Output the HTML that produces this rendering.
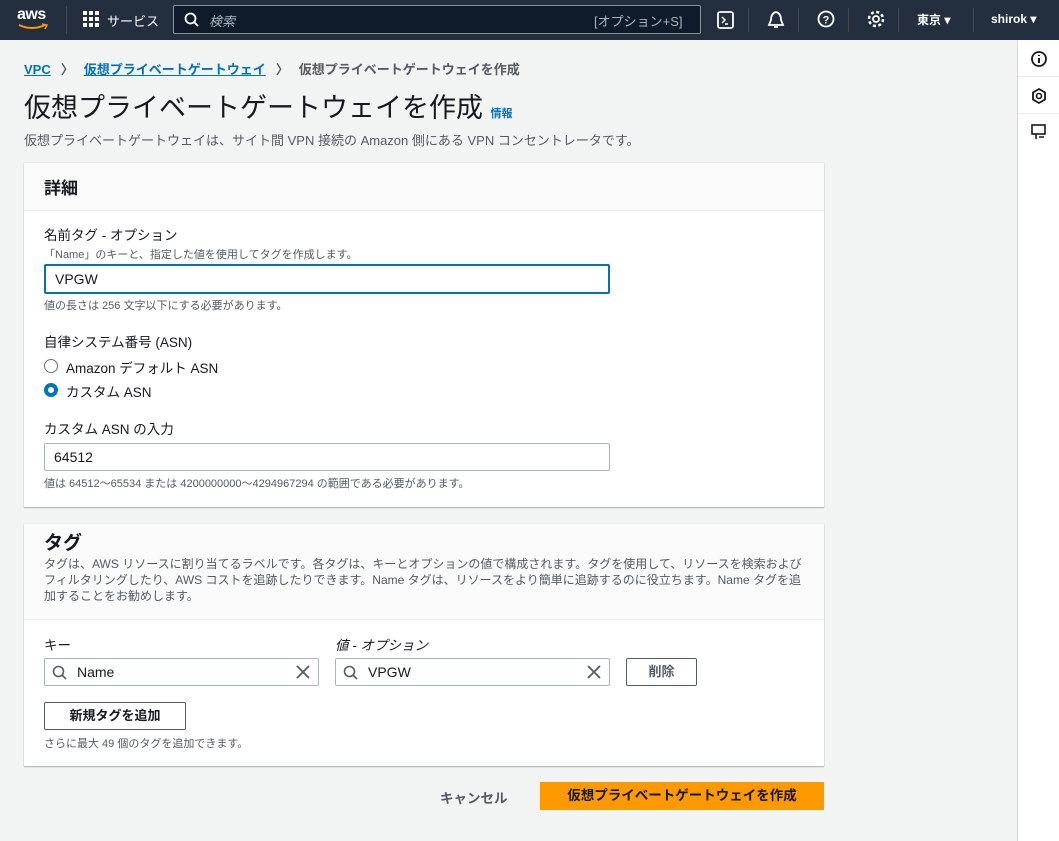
<!DOCTYPE html><html><head><meta charset="utf-8"><style>
*{box-sizing:border-box;margin:0;padding:0}
body{width:1059px;height:841px;overflow:hidden;background:#f2f3f3;font-family:"Liberation Sans","Noto Sans CJK JP",sans-serif;color:#16191f;position:relative;font-size:13px}
.top{position:absolute;left:0;top:0;width:1059px;height:40px;background:#232f3e;color:#fff}
.a{position:absolute}
.side{position:absolute;left:1017px;top:40px;width:42px;height:801px;background:#fff;border-left:1px solid #d5dbdb}
.panel{position:absolute;left:24px;width:800px;background:#fff;box-shadow:0 1px 1px rgba(0,33,43,.3),0 0 0 1px #eaeded}
.hd{background:#fafafa;border-bottom:1px solid #eaeded}
input,.inp{position:absolute;border:1px solid #aab7b8;border-radius:2px;height:28px;background:#fff;font-size:14px;padding-left:9px;line-height:26px}
.btn{position:absolute;border:1px solid #545b64;border-radius:2px;background:#fff;font-weight:bold;font-size:13px;text-align:center;color:#545b64}
.sm{font-size:11px;color:#545b64}
.lbl{font-size:13.5px}
</style></head><body>
<div class="top">
<div class="a" style="left:17px;top:6px;font-size:16px;font-weight:bold;letter-spacing:-0.5px">aws</div>
<svg class="a" style="left:17px;top:23px" width="32" height="8"><path d="M2 2 Q15 8 28 2" stroke="#f90" stroke-width="2" fill="none"/><path d="M25 1 L30 2 L28 6" stroke="#f90" stroke-width="1.5" fill="none"/></svg>
<div class="a" style="left:66px;top:6px;width:1px;height:28px;background:#414750"></div>
<svg class="a" style="left:83px;top:11px" width="18" height="18" fill="#fff"><rect x="0" y="0" width="4" height="4"/><rect x="6" y="0" width="4" height="4"/><rect x="12" y="0" width="4" height="4"/><rect x="0" y="6" width="4" height="4"/><rect x="6" y="6" width="4" height="4"/><rect x="12" y="6" width="4" height="4"/><rect x="0" y="12" width="4" height="4"/><rect x="6" y="12" width="4" height="4"/><rect x="12" y="12" width="4" height="4"/></svg>
<div class="a" style="left:107px;top:11px;font-size:13px">サービス</div>
<div class="a" style="left:173px;top:5px;width:528px;height:29px;border:1px solid #879596;border-radius:2px;background:#0f1b2a"></div>
<svg class="a" style="left:184px;top:12px" width="16" height="16"><circle cx="6.5" cy="6.5" r="5" stroke="#fff" stroke-width="1.8" fill="none"/><path d="M10 10 L14 14" stroke="#fff" stroke-width="1.8"/></svg>
<div class="a" style="left:209px;top:11px;color:#aab7b8;font-style:italic">検索</div>
<div class="a" style="left:594px;top:11px;color:#aab7b8">[オプション+S]</div>
<svg class="a" style="left:716px;top:10px" width="20" height="20"><rect x="2" y="2" width="15" height="16" rx="2" stroke="#fff" stroke-width="1.8" fill="none"/><path d="M6 7 L9 10 L6 13 M9 14 H12" stroke="#fff" stroke-width="1.5" fill="none"/></svg>
<div class="a" style="left:748px;top:8px;width:1px;height:24px;background:#414750"></div>
<svg class="a" style="left:766px;top:10px" width="20" height="20"><path d="M10 2 C6 3 5 7 5 10 L3 15 H17 L15 10 C15 7 14 3 10 2Z M8 17 H12" stroke="#fff" stroke-width="1.8" fill="none"/></svg>
<div class="a" style="left:798px;top:8px;width:1px;height:24px;background:#414750"></div>
<svg class="a" style="left:816px;top:9px" width="20" height="20"><circle cx="10" cy="10" r="7.5" stroke="#fff" stroke-width="1.8" fill="none"/><text x="10" y="14.5" fill="#fff" font-size="11" font-weight="bold" text-anchor="middle" font-family="Liberation Sans">?</text></svg>
<div class="a" style="left:848px;top:8px;width:1px;height:24px;background:#414750"></div>
<svg class="a" style="left:866px;top:9px" width="20" height="20"><circle cx="10" cy="10" r="3" stroke="#fff" stroke-width="1.8" fill="none"/><circle cx="10" cy="10" r="7" stroke="#fff" stroke-width="2.5" stroke-dasharray="3 2.5" fill="none"/></svg>
<div class="a" style="left:898px;top:8px;width:1px;height:24px;background:#414750"></div>
<div class="a" style="left:917px;top:11px;font-weight:bold;font-size:12px">東京 ▾</div>
<div class="a" style="left:973px;top:8px;width:1px;height:24px;background:#414750"></div>
<div class="a" style="left:991px;top:12px;font-weight:bold;font-size:12px">shirok ▾</div>
</div>
<div class="side">
<svg class="a" style="left:12px;top:10px" width="18" height="18"><circle cx="9" cy="9" r="7" stroke="#16191f" stroke-width="1.8" fill="none"/><path d="M9 8 V13 M9 5 V6" stroke="#16191f" stroke-width="2"/></svg>
<div class="a" style="left:0;top:36px;width:42px;height:1px;background:#eaeded"></div>
<svg class="a" style="left:12px;top:47px" width="18" height="18"><path d="M9 2 L15 5.5 V12.5 L9 16 L3 12.5 V5.5Z" stroke="#16191f" stroke-width="1.8" fill="none"/><circle cx="9" cy="9" r="2.5" stroke="#16191f" stroke-width="1.6" fill="none"/></svg>
<div class="a" style="left:0;top:73px;width:42px;height:1px;background:#eaeded"></div>
<svg class="a" style="left:12px;top:83px" width="18" height="18"><rect x="2" y="2" width="13" height="9" stroke="#16191f" stroke-width="1.6" fill="none"/><path d="M6 11 V16 M9 14 H14" stroke="#16191f" stroke-width="1.6"/></svg>
</div>
<div class="a" style="left:24px;top:59px;font-size:13px;font-weight:bold"><span style="color:#0073bb;text-decoration:underline">VPC</span><span style="color:#545b64;margin:0 10px">〉</span><span style="color:#0073bb;text-decoration:underline">仮想プライベートゲートウェイ</span><span style="color:#545b64;margin:0 10px">〉</span><span style="color:#545b64">仮想プライベートゲートウェイを作成</span></div>
<div class="a" style="left:24px;top:90px;font-size:27px;line-height:36px">仮想プライベートゲートウェイを作成 <span style="font-size:11px;color:#0073bb;font-weight:bold">情報</span></div>
<div class="a" style="left:24px;top:130px;font-size:13px;color:#545b64">仮想プライベートゲートウェイは、サイト間 VPN 接続の Amazon 側にある VPN コンセントレータです。</div>

<div class="panel" style="top:163px;height:344px">
<div class="hd" style="height:48px;padding:11px 20px;font-size:17px;font-weight:bold">詳細</div>
<div class="a lbl" style="left:20px;top:61px">名前タグ - オプション</div>
<div class="a sm" style="left:20px;top:83px">「Name」のキーと、指定した値を使用してタグを作成します。</div>
<div class="inp" style="left:20px;top:101px;width:566px;height:30px;border:2px solid #0073bb">VPGW</div>
<div class="a sm" style="left:20px;top:134px">値の長さは 256 文字以下にする必要があります。</div>
<div class="a lbl" style="left:20px;top:168px">自律システム番号 (ASN)</div>
<div class="a" style="left:20px;top:196px;width:14px;height:14px;border:1px solid #687078;border-radius:50%"></div>
<div class="a lbl" style="left:42px;top:194px">Amazon デフォルト ASN</div>
<div class="a" style="left:20px;top:220px;width:14px;height:14px;border:4px solid #0073bb;border-radius:50%"></div>
<div class="a lbl" style="left:42px;top:218px">カスタム ASN</div>
<div class="a lbl" style="left:20px;top:255px">カスタム ASN の入力</div>
<div class="inp" style="left:20px;top:280px;width:566px">64512</div>
<div class="a sm" style="left:20px;top:312px">値は 64512〜65534 または 4200000000〜4294967294 の範囲である必要があります。</div>
</div>

<div class="panel" style="top:524px;height:242px">
<div class="hd" style="height:96px;padding:8px 20px 8px 20px"><div style="font-size:19px;font-weight:bold;line-height:24px">タグ</div><div class="sm" style="line-height:16px;font-size:12px">タグは、AWS リソースに割り当てるラベルです。各タグは、キーとオプションの値で構成されます。タグを使用して、リソースを検索およびフィルタリングしたり、AWS コストを追跡したりできます。Name タグは、リソースをより簡単に追跡するのに役立ちます。Name タグを追加することをお勧めします。</div></div>
<div class="a lbl" style="left:20px;top:110px">キー</div>
<div class="a lbl" style="left:311px;top:110px;font-style:italic">値 - オプション</div>
<div class="inp" style="left:20px;top:134px;width:275px;padding-left:32px">Name</div>
<div class="inp" style="left:311px;top:134px;width:275px;padding-left:32px">VPGW</div>
<svg class="a" style="left:28px;top:141px" width="16" height="16"><circle cx="6.5" cy="6.5" r="5" stroke="#545b64" stroke-width="1.6" fill="none"/><path d="M10 10 L14 14" stroke="#545b64" stroke-width="1.6"/></svg>
<svg class="a" style="left:319px;top:141px" width="16" height="16"><circle cx="6.5" cy="6.5" r="5" stroke="#545b64" stroke-width="1.6" fill="none"/><path d="M10 10 L14 14" stroke="#545b64" stroke-width="1.6"/></svg>
<svg class="a" style="left:272px;top:141px" width="14" height="14"><path d="M1 1 L13 13 M13 1 L1 13" stroke="#545b64" stroke-width="1.8"/></svg>
<svg class="a" style="left:563px;top:141px" width="14" height="14"><path d="M1 1 L13 13 M13 1 L1 13" stroke="#545b64" stroke-width="1.8"/></svg>
<div class="btn" style="left:602px;top:134px;width:71px;height:28px;line-height:26px">削除</div>
<div class="btn" style="left:20px;top:178px;width:142px;height:28px;line-height:26px;color:#16191f">新規タグを追加</div>
<div class="a sm" style="left:20px;top:211px">さらに最大 49 個のタグを追加できます。</div>
</div>

<div class="a" style="left:440px;top:787px;font-weight:bold;font-size:13.5px;color:#545b64">キャンセル</div>
<div class="a" style="left:540px;top:782px;width:284px;height:28px;background:#ff9900;font-weight:bold;font-size:13.5px;text-align:center;line-height:28px;color:#16191f">仮想プライベートゲートウェイを作成</div>
</body></html>
